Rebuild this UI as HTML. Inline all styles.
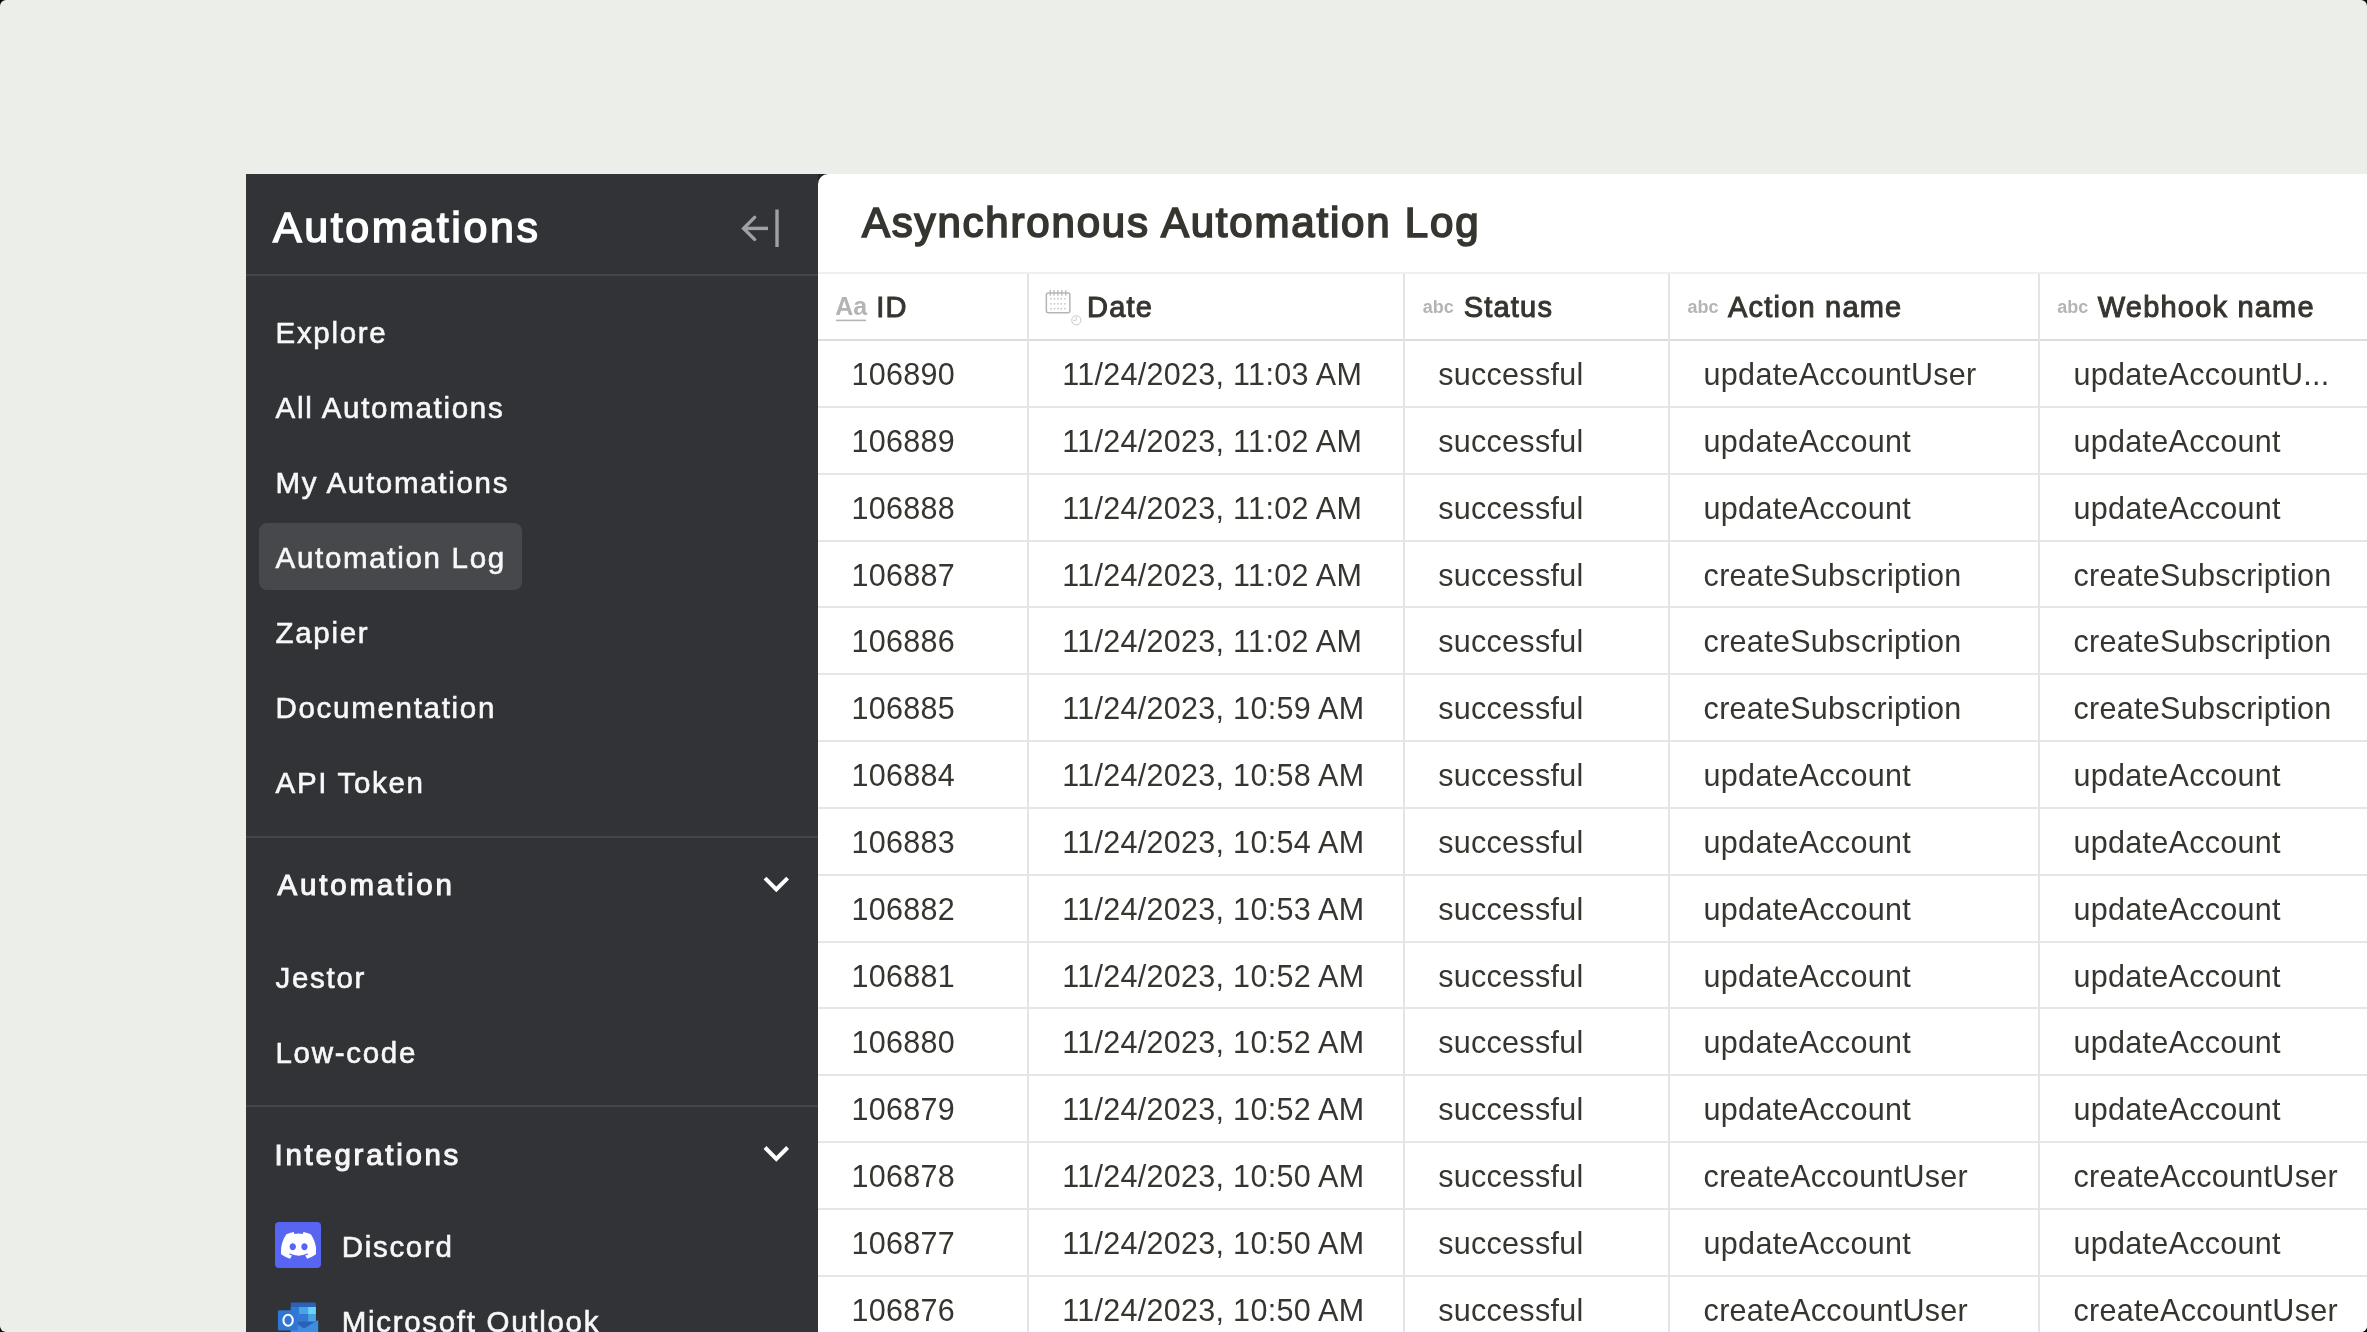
<!DOCTYPE html>
<html><head><meta charset="utf-8">
<style>
html,body{margin:0;padding:0;width:2367px;height:1332px;overflow:hidden;background:#000;}
*{box-sizing:border-box;}
#frame{will-change:transform;position:absolute;left:0;top:0;width:2367px;height:1332px;background:#eceee9;border-radius:6px;overflow:hidden;font-family:"Liberation Sans",sans-serif;}
#side{position:absolute;left:246px;top:174px;width:572px;height:1158px;background:#323337;color:#f4f4f4;overflow:hidden;}
#main{position:absolute;left:818px;top:174px;width:1549px;height:1158px;background:#fff;border-top-left-radius:10px;overflow:hidden;}
.t{position:absolute;white-space:nowrap;line-height:1;}
.hr{position:absolute;left:0;width:572px;height:2px;background:#45464a;}
.nav{color:#f8f8f8;-webkit-text-stroke:0.6px #f8f8f8;}
.cell{color:#37352f;}
.hl{position:absolute;left:0;width:1549px;height:2px;background:#e5e6e8;}
.vl{position:absolute;width:2px;background:#e3e4e7;}
</style></head><body>
<div id="frame">
 <div id="side">
<div class="t" style="left:27.00px;top:32.18px;font-size:43px;color:#fff;-webkit-text-stroke:1.5px #fff;letter-spacing:2.6px">Automations</div>
<div class="hr" style="top:100px"></div>
<div style="position:absolute;left:12.5px;top:349px;width:263px;height:66.5px;background:#47484c;border-radius:8px"></div>
<div class="t nav" style="left:29.50px;top:143.71px;font-size:29.5px;letter-spacing:1.7px">Explore</div>
<div class="t nav" style="left:29.50px;top:218.71px;font-size:29.5px;letter-spacing:1.7px">All Automations</div>
<div class="t nav" style="left:29.50px;top:293.71px;font-size:29.5px;letter-spacing:1.7px">My Automations</div>
<div class="t nav" style="left:29.50px;top:368.71px;font-size:29.5px;letter-spacing:1.7px">Automation Log</div>
<div class="t nav" style="left:29.50px;top:443.71px;font-size:29.5px;letter-spacing:1.7px">Zapier</div>
<div class="t nav" style="left:29.50px;top:518.71px;font-size:29.5px;letter-spacing:1.7px">Documentation</div>
<div class="t nav" style="left:29.50px;top:593.71px;font-size:29.5px;letter-spacing:1.7px">API Token</div>
<div class="hr" style="top:662px"></div>
<div class="t" style="left:31.50px;top:696.41px;font-size:29.5px;color:#f6f6f6;-webkit-text-stroke:1.1px #f6f6f6;letter-spacing:2.8px">Automation</div>
<div class="t nav" style="left:29.50px;top:788.71px;font-size:29.5px;letter-spacing:1.7px">Jestor</div>
<div class="t nav" style="left:29.50px;top:863.71px;font-size:29.5px;letter-spacing:1.7px">Low-code</div>
<div class="hr" style="top:931px"></div>
<div class="t" style="left:28.50px;top:965.91px;font-size:29.5px;color:#f6f6f6;-webkit-text-stroke:1.1px #f6f6f6;letter-spacing:2.7px">Integrations</div>
<div class="t nav" style="left:95.70px;top:1058.31px;font-size:29.5px;letter-spacing:1.7px">Discord</div>
<div class="t nav" style="left:95.70px;top:1133.11px;font-size:29.5px;letter-spacing:1.7px">Microsoft Outlook</div>
<svg style="position:absolute;left:0;top:0" width="572" height="1158"><g transform="translate(-246,-174)" fill="none" stroke="#a0a1a3" stroke-width="3.4"><path d="M768,228.4 H744"/><path d="M754.6,217.4 L743.6,228.4 L754.6,239.4" stroke-linecap="round" stroke-linejoin="miter"/><path d="M777,209.5 V247"/></g><g transform="translate(-246,-174)" fill="none" stroke="#fff" stroke-width="4"><path d="M765,878.1 L776.3,889.4 L787.6,878.1"/><path d="M765,1147.5 L776.3,1158.8 L787.6,1147.5"/></g></svg>
<div style="position:absolute;left:29px;top:1048.2px;width:46px;height:45.6px;background:#5865f2;border-radius:4px"></div>
<svg style="position:absolute;left:34.8px;top:1058.2px" width="35.2" height="26.7" viewBox="0 0 127.14 96.36"><path fill="#fff" d="M107.7,8.07A105.15,105.15,0,0,0,81.47,0a72.06,72.06,0,0,0-3.36,6.83A97.68,97.68,0,0,0,49,6.83,72.37,72.37,0,0,0,45.64,0,105.89,105.89,0,0,0,19.39,8.09C2.79,32.65-1.71,56.6.54,80.21h0A105.73,105.73,0,0,0,32.71,96.36,77.7,77.7,0,0,0,39.6,85.25a68.42,68.42,0,0,1-10.85-5.18c.91-.66,1.8-1.34,2.66-2a75.57,75.57,0,0,0,64.32,0c.87.71,1.76,1.39,2.66,2a68.68,68.68,0,0,1-10.87,5.19,77,77,0,0,0,6.89,11.1A105.25,105.25,0,0,0,126.6,80.22h0C129.24,52.84,122.09,29.11,107.7,8.07ZM42.45,65.69C36.18,65.69,31,60,31,53s5-12.74,11.43-12.74S54,46,53.89,53,48.84,65.69,42.45,65.69Zm42.24,0C78.41,65.69,73.25,60,73.25,53s5-12.74,11.44-12.74S96.23,46,96.12,53,91.08,65.69,84.69,65.69Z"/></svg>
<svg style="position:absolute;left:0;top:0" width="572" height="1158"><g transform="translate(-246,-174)"><rect x="290.8" y="1302.6" width="25.1" height="30" rx="1.2" fill="#2a62b8"/><rect x="299" y="1307" width="9.1" height="7" fill="#4aa3e2"/><rect x="308.1" y="1307" width="7.8" height="7" fill="#65d6f8"/><rect x="290.8" y="1307" width="8.2" height="7" fill="#3077d0"/><rect x="290.8" y="1314" width="8.2" height="7.5" fill="#3a7fd6"/><rect x="299" y="1314" width="9.1" height="7.5" fill="#3578d4"/><rect x="308.1" y="1314" width="7.8" height="7.5" fill="#4aa3e2"/><path d="M290.8,1320 L304,1328.5 L318.2,1320 V1340 H290.8 Z" fill="#3d8ee0"/><rect x="277.9" y="1310.2" width="20.1" height="20.2" rx="1.5" fill="#3077d4"/><ellipse cx="288.1" cy="1320.3" rx="4.7" ry="5.5" fill="none" stroke="#fff" stroke-width="2"/></g></svg>

 </div>
<div style="position:absolute;left:818px;top:174px;width:14px;height:14px;background:#232429"></div>

 <div id="main">
<div class="t" style="left:44.00px;top:28.03px;font-size:42px;color:#37352f;-webkit-text-stroke:1.7px #37352f;letter-spacing:1.8px">Asynchronous Automation Log</div>
<div class="hl" style="top:98px;background:#eeeff1"></div>
<div class="hl" style="top:165px;background:#dcdde0"></div>
<div class="hl" style="top:232px"></div>
<div class="hl" style="top:299px"></div>
<div class="hl" style="top:366px"></div>
<div class="hl" style="top:432px"></div>
<div class="hl" style="top:499px"></div>
<div class="hl" style="top:566px"></div>
<div class="hl" style="top:633px"></div>
<div class="hl" style="top:700px"></div>
<div class="hl" style="top:767px"></div>
<div class="hl" style="top:833px"></div>
<div class="hl" style="top:900px"></div>
<div class="hl" style="top:967px"></div>
<div class="hl" style="top:1034px"></div>
<div class="hl" style="top:1101px"></div>
<div class="vl" style="left:209px;top:100px;height:1058px"></div>
<div class="vl" style="left:585px;top:100px;height:1058px"></div>
<div class="vl" style="left:850px;top:100px;height:1058px"></div>
<div class="vl" style="left:1220px;top:100px;height:1058px"></div>
<div class="t cell" style="left:33.50px;top:185.07px;font-size:30.5px;letter-spacing:0.3px">106890</div>
<div class="t cell" style="left:244.20px;top:185.07px;font-size:30.5px;letter-spacing:0.3px">11/24/2023, 11:03 AM</div>
<div class="t cell" style="left:620.20px;top:185.07px;font-size:30.5px;letter-spacing:0.3px">successful</div>
<div class="t cell" style="left:885.60px;top:185.07px;font-size:30.5px;letter-spacing:0.3px">updateAccountUser</div>
<div class="t cell" style="left:1255.50px;top:185.07px;font-size:30.5px;letter-spacing:0.3px">updateAccountU...</div>
<div class="t cell" style="left:33.50px;top:251.91px;font-size:30.5px;letter-spacing:0.3px">106889</div>
<div class="t cell" style="left:244.20px;top:251.91px;font-size:30.5px;letter-spacing:0.3px">11/24/2023, 11:02 AM</div>
<div class="t cell" style="left:620.20px;top:251.91px;font-size:30.5px;letter-spacing:0.3px">successful</div>
<div class="t cell" style="left:885.60px;top:251.91px;font-size:30.5px;letter-spacing:0.3px">updateAccount</div>
<div class="t cell" style="left:1255.50px;top:251.91px;font-size:30.5px;letter-spacing:0.3px">updateAccount</div>
<div class="t cell" style="left:33.50px;top:318.75px;font-size:30.5px;letter-spacing:0.3px">106888</div>
<div class="t cell" style="left:244.20px;top:318.75px;font-size:30.5px;letter-spacing:0.3px">11/24/2023, 11:02 AM</div>
<div class="t cell" style="left:620.20px;top:318.75px;font-size:30.5px;letter-spacing:0.3px">successful</div>
<div class="t cell" style="left:885.60px;top:318.75px;font-size:30.5px;letter-spacing:0.3px">updateAccount</div>
<div class="t cell" style="left:1255.50px;top:318.75px;font-size:30.5px;letter-spacing:0.3px">updateAccount</div>
<div class="t cell" style="left:33.50px;top:385.59px;font-size:30.5px;letter-spacing:0.3px">106887</div>
<div class="t cell" style="left:244.20px;top:385.59px;font-size:30.5px;letter-spacing:0.3px">11/24/2023, 11:02 AM</div>
<div class="t cell" style="left:620.20px;top:385.59px;font-size:30.5px;letter-spacing:0.3px">successful</div>
<div class="t cell" style="left:885.60px;top:385.59px;font-size:30.5px;letter-spacing:0.3px">createSubscription</div>
<div class="t cell" style="left:1255.50px;top:385.59px;font-size:30.5px;letter-spacing:0.3px">createSubscription</div>
<div class="t cell" style="left:33.50px;top:452.43px;font-size:30.5px;letter-spacing:0.3px">106886</div>
<div class="t cell" style="left:244.20px;top:452.43px;font-size:30.5px;letter-spacing:0.3px">11/24/2023, 11:02 AM</div>
<div class="t cell" style="left:620.20px;top:452.43px;font-size:30.5px;letter-spacing:0.3px">successful</div>
<div class="t cell" style="left:885.60px;top:452.43px;font-size:30.5px;letter-spacing:0.3px">createSubscription</div>
<div class="t cell" style="left:1255.50px;top:452.43px;font-size:30.5px;letter-spacing:0.3px">createSubscription</div>
<div class="t cell" style="left:33.50px;top:519.27px;font-size:30.5px;letter-spacing:0.3px">106885</div>
<div class="t cell" style="left:244.20px;top:519.27px;font-size:30.5px;letter-spacing:0.3px">11/24/2023, 10:59 AM</div>
<div class="t cell" style="left:620.20px;top:519.27px;font-size:30.5px;letter-spacing:0.3px">successful</div>
<div class="t cell" style="left:885.60px;top:519.27px;font-size:30.5px;letter-spacing:0.3px">createSubscription</div>
<div class="t cell" style="left:1255.50px;top:519.27px;font-size:30.5px;letter-spacing:0.3px">createSubscription</div>
<div class="t cell" style="left:33.50px;top:586.11px;font-size:30.5px;letter-spacing:0.3px">106884</div>
<div class="t cell" style="left:244.20px;top:586.11px;font-size:30.5px;letter-spacing:0.3px">11/24/2023, 10:58 AM</div>
<div class="t cell" style="left:620.20px;top:586.11px;font-size:30.5px;letter-spacing:0.3px">successful</div>
<div class="t cell" style="left:885.60px;top:586.11px;font-size:30.5px;letter-spacing:0.3px">updateAccount</div>
<div class="t cell" style="left:1255.50px;top:586.11px;font-size:30.5px;letter-spacing:0.3px">updateAccount</div>
<div class="t cell" style="left:33.50px;top:652.95px;font-size:30.5px;letter-spacing:0.3px">106883</div>
<div class="t cell" style="left:244.20px;top:652.95px;font-size:30.5px;letter-spacing:0.3px">11/24/2023, 10:54 AM</div>
<div class="t cell" style="left:620.20px;top:652.95px;font-size:30.5px;letter-spacing:0.3px">successful</div>
<div class="t cell" style="left:885.60px;top:652.95px;font-size:30.5px;letter-spacing:0.3px">updateAccount</div>
<div class="t cell" style="left:1255.50px;top:652.95px;font-size:30.5px;letter-spacing:0.3px">updateAccount</div>
<div class="t cell" style="left:33.50px;top:719.79px;font-size:30.5px;letter-spacing:0.3px">106882</div>
<div class="t cell" style="left:244.20px;top:719.79px;font-size:30.5px;letter-spacing:0.3px">11/24/2023, 10:53 AM</div>
<div class="t cell" style="left:620.20px;top:719.79px;font-size:30.5px;letter-spacing:0.3px">successful</div>
<div class="t cell" style="left:885.60px;top:719.79px;font-size:30.5px;letter-spacing:0.3px">updateAccount</div>
<div class="t cell" style="left:1255.50px;top:719.79px;font-size:30.5px;letter-spacing:0.3px">updateAccount</div>
<div class="t cell" style="left:33.50px;top:786.63px;font-size:30.5px;letter-spacing:0.3px">106881</div>
<div class="t cell" style="left:244.20px;top:786.63px;font-size:30.5px;letter-spacing:0.3px">11/24/2023, 10:52 AM</div>
<div class="t cell" style="left:620.20px;top:786.63px;font-size:30.5px;letter-spacing:0.3px">successful</div>
<div class="t cell" style="left:885.60px;top:786.63px;font-size:30.5px;letter-spacing:0.3px">updateAccount</div>
<div class="t cell" style="left:1255.50px;top:786.63px;font-size:30.5px;letter-spacing:0.3px">updateAccount</div>
<div class="t cell" style="left:33.50px;top:853.47px;font-size:30.5px;letter-spacing:0.3px">106880</div>
<div class="t cell" style="left:244.20px;top:853.47px;font-size:30.5px;letter-spacing:0.3px">11/24/2023, 10:52 AM</div>
<div class="t cell" style="left:620.20px;top:853.47px;font-size:30.5px;letter-spacing:0.3px">successful</div>
<div class="t cell" style="left:885.60px;top:853.47px;font-size:30.5px;letter-spacing:0.3px">updateAccount</div>
<div class="t cell" style="left:1255.50px;top:853.47px;font-size:30.5px;letter-spacing:0.3px">updateAccount</div>
<div class="t cell" style="left:33.50px;top:920.31px;font-size:30.5px;letter-spacing:0.3px">106879</div>
<div class="t cell" style="left:244.20px;top:920.31px;font-size:30.5px;letter-spacing:0.3px">11/24/2023, 10:52 AM</div>
<div class="t cell" style="left:620.20px;top:920.31px;font-size:30.5px;letter-spacing:0.3px">successful</div>
<div class="t cell" style="left:885.60px;top:920.31px;font-size:30.5px;letter-spacing:0.3px">updateAccount</div>
<div class="t cell" style="left:1255.50px;top:920.31px;font-size:30.5px;letter-spacing:0.3px">updateAccount</div>
<div class="t cell" style="left:33.50px;top:987.15px;font-size:30.5px;letter-spacing:0.3px">106878</div>
<div class="t cell" style="left:244.20px;top:987.15px;font-size:30.5px;letter-spacing:0.3px">11/24/2023, 10:50 AM</div>
<div class="t cell" style="left:620.20px;top:987.15px;font-size:30.5px;letter-spacing:0.3px">successful</div>
<div class="t cell" style="left:885.60px;top:987.15px;font-size:30.5px;letter-spacing:0.3px">createAccountUser</div>
<div class="t cell" style="left:1255.50px;top:987.15px;font-size:30.5px;letter-spacing:0.3px">createAccountUser</div>
<div class="t cell" style="left:33.50px;top:1053.99px;font-size:30.5px;letter-spacing:0.3px">106877</div>
<div class="t cell" style="left:244.20px;top:1053.99px;font-size:30.5px;letter-spacing:0.3px">11/24/2023, 10:50 AM</div>
<div class="t cell" style="left:620.20px;top:1053.99px;font-size:30.5px;letter-spacing:0.3px">successful</div>
<div class="t cell" style="left:885.60px;top:1053.99px;font-size:30.5px;letter-spacing:0.3px">updateAccount</div>
<div class="t cell" style="left:1255.50px;top:1053.99px;font-size:30.5px;letter-spacing:0.3px">updateAccount</div>
<div class="t cell" style="left:33.50px;top:1120.83px;font-size:30.5px;letter-spacing:0.3px">106876</div>
<div class="t cell" style="left:244.20px;top:1120.83px;font-size:30.5px;letter-spacing:0.3px">11/24/2023, 10:50 AM</div>
<div class="t cell" style="left:620.20px;top:1120.83px;font-size:30.5px;letter-spacing:0.3px">successful</div>
<div class="t cell" style="left:885.60px;top:1120.83px;font-size:30.5px;letter-spacing:0.3px">createAccountUser</div>
<div class="t cell" style="left:1255.50px;top:1120.83px;font-size:30.5px;letter-spacing:0.3px">createAccountUser</div>
<div class="t" style="left:58.20px;top:119.44px;font-size:29px;color:#37352f;-webkit-text-stroke:1px #37352f;letter-spacing:1.2px">ID</div>
<div class="t" style="left:269.00px;top:119.44px;font-size:29px;color:#37352f;-webkit-text-stroke:1px #37352f;letter-spacing:1.2px">Date</div>
<div class="t" style="left:645.70px;top:119.44px;font-size:29px;color:#37352f;-webkit-text-stroke:1px #37352f;letter-spacing:1.2px">Status</div>
<div class="t" style="left:910.00px;top:119.44px;font-size:29px;color:#37352f;-webkit-text-stroke:1px #37352f;letter-spacing:1.2px">Action name</div>
<div class="t" style="left:1279.80px;top:119.44px;font-size:29px;color:#37352f;-webkit-text-stroke:1px #37352f;letter-spacing:1.2px">Webhook name</div>
<div class="t" style="left:604.80px;top:123.65px;font-size:18px;font-weight:700;color:#b4b4b4">abc</div>
<div class="t" style="left:869.50px;top:123.65px;font-size:18px;font-weight:700;color:#b4b4b4">abc</div>
<div class="t" style="left:1239.30px;top:123.65px;font-size:18px;font-weight:700;color:#b4b4b4">abc</div>
<div class="t" style="left:17.20px;top:120.33px;font-size:25px;font-weight:700;color:#b4b4b4">Aa</div>
<svg style="position:absolute;left:0;top:0" width="1549" height="400"><g transform="translate(-818,-174)"><rect x="1046.35" y="293.05" width="23.5" height="19.7" rx="2" fill="none" stroke="#b5b5b5" stroke-width="1.5"/><rect x="1049.7" y="290" width="1.2" height="5.8" fill="#b5b5b5"/><rect x="1053.4" y="290" width="1.2" height="5.8" fill="#b5b5b5"/><rect x="1057.3" y="290" width="1.2" height="5.8" fill="#b5b5b5"/><rect x="1061.2" y="290" width="1.2" height="5.8" fill="#b5b5b5"/><rect x="1065.2" y="290" width="1.2" height="5.8" fill="#b5b5b5"/><rect x="1050.2" y="298.1" width="1.5" height="1.5" fill="#c4c4c4"/><rect x="1050.2" y="303.1" width="1.5" height="1.5" fill="#c4c4c4"/><rect x="1050.2" y="307.9" width="1.5" height="1.5" fill="#c4c4c4"/><rect x="1053.8" y="298.1" width="1.5" height="1.5" fill="#c4c4c4"/><rect x="1053.8" y="303.1" width="1.5" height="1.5" fill="#c4c4c4"/><rect x="1053.8" y="307.9" width="1.5" height="1.5" fill="#c4c4c4"/><rect x="1057.2" y="298.1" width="1.5" height="1.5" fill="#c4c4c4"/><rect x="1057.2" y="303.1" width="1.5" height="1.5" fill="#c4c4c4"/><rect x="1057.2" y="307.9" width="1.5" height="1.5" fill="#c4c4c4"/><rect x="1060.5" y="298.1" width="1.5" height="1.5" fill="#c4c4c4"/><rect x="1060.5" y="303.1" width="1.5" height="1.5" fill="#c4c4c4"/><rect x="1060.5" y="307.9" width="1.5" height="1.5" fill="#c4c4c4"/><rect x="1064.2" y="298.1" width="1.5" height="1.5" fill="#c4c4c4"/><rect x="1064.2" y="303.1" width="1.5" height="1.5" fill="#c4c4c4"/><rect x="1064.2" y="307.9" width="1.5" height="1.5" fill="#c4c4c4"/><circle cx="1076.3" cy="320.3" r="4.6" fill="#fff" stroke="#c8c8c8" stroke-width="1"/><path d="M1076.3,316.8 V320.3 H1073" fill="none" stroke="#c8c8c8" stroke-width="0.9"/><rect x="836" y="319.6" width="30" height="1.6" fill="#b4b4b4"/></g></svg>

 </div>
</div>
</body></html>
